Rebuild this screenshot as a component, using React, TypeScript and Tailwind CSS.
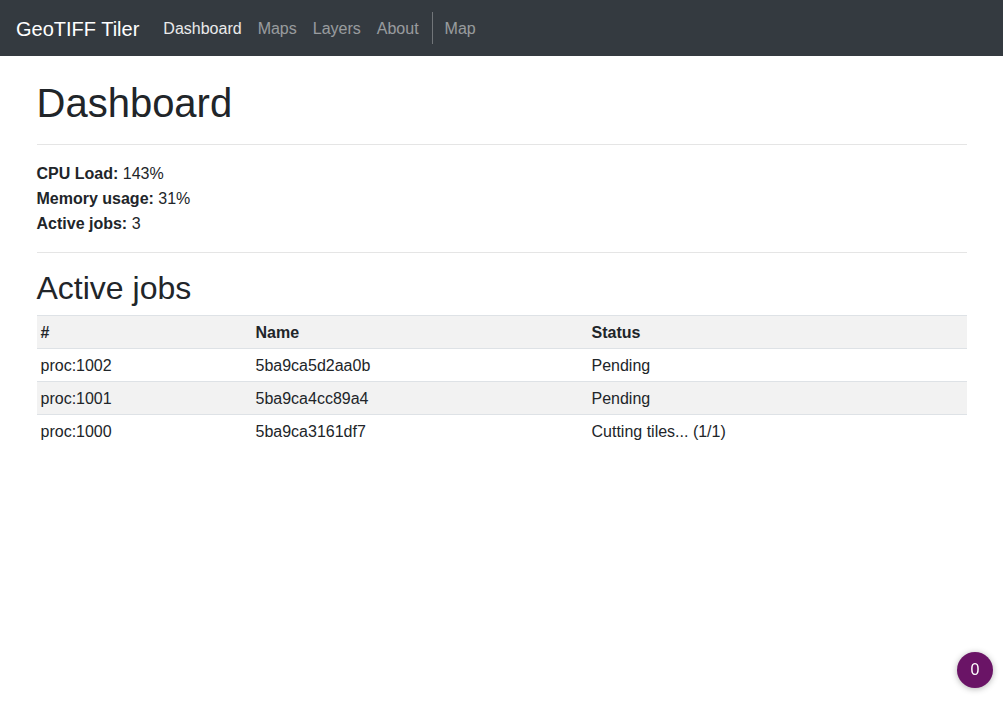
export default function App() {
  const jobs = [
    { id: "proc:1002", name: "5ba9ca5d2aa0b", status: "Pending" },
    { id: "proc:1001", name: "5ba9ca4cc89a4", status: "Pending" },
    { id: "proc:1000", name: "5ba9ca3161df7", status: "Cutting tiles... (1/1)" },
  ];

  return (
    <div className="min-h-[720px] bg-white text-[#212529] font-['Liberation_Sans',Arial,sans-serif] text-base">
      {/* Navbar */}
      <nav className="h-14 bg-[#343a40] flex items-center px-4 pt-[2px]">
        <span className="text-xl text-white mr-4">GeoTIFF Tiler</span>
        <a className="px-2 text-white/90">Dashboard</a>
        <a className="px-2 text-white/50">Maps</a>
        <a className="px-2 text-white/50">Layers</a>
        <a className="px-2 text-white/50">About</a>
        <span className="w-px h-8 bg-white/30 ml-[5px] mr-1 -mt-[2px]" />
        <a className="px-2 text-white/50">Map</a>
      </nav>

      {/* Content */}
      <div className="max-w-[960px] mx-auto px-[15px]">
        <h1 className="text-[40px] leading-[48px] mt-[23px]">Dashboard</h1>
        <hr className="mt-[17px] border-t border-[#e5e5e5]" />

        <div className="leading-[25px] pt-[16px] pb-[16px]">
          <div><b>CPU Load:</b> 143%</div>
          <div><b>Memory usage:</b> 31%</div>
          <div><b>Active jobs:</b> 3</div>
        </div>
        <hr className="border-t border-[#e5e5e5]" />

        <h2 className="text-[32px] leading-[38px] mt-[16px] mb-[8px]">Active jobs</h2>

        <table className="w-full border-collapse text-left">
          <thead>
            <tr className="bg-[#f2f2f2] border-y border-[#dee2e6]">
              <th className="w-[215px] px-1 pt-[2px] h-[33px] font-bold">#</th>
              <th className="w-[336px] px-1 pt-[2px] h-[33px] font-bold">Name</th>
              <th className="px-1 pt-[2px] h-[33px] font-bold">Status</th>
            </tr>
          </thead>
          <tbody>
            {jobs.map((job, i) => (
              <tr
                key={job.id}
                className={
                  (i % 2 === 1 ? "bg-[#f2f2f2] " : "") + (i > 0 ? "border-t border-[#dee2e6]" : "")
                }
              >
                <td className="px-1 pt-[2px] h-[33px]">{job.id}</td>
                <td className="px-1 pt-[2px] h-[33px]">{job.name}</td>
                <td className="px-1 pt-[2px] h-[33px]">{job.status}</td>
              </tr>
            ))}
          </tbody>
        </table>
      </div>

      {/* Notification badge */}
      <div className="fixed right-[10px] bottom-[32px] w-9 h-9 rounded-full bg-[#6a1466] text-white flex items-center justify-center shadow-[0_1px_6px_rgba(0,0,0,0.3)]">
        0
      </div>
    </div>
  );
}
